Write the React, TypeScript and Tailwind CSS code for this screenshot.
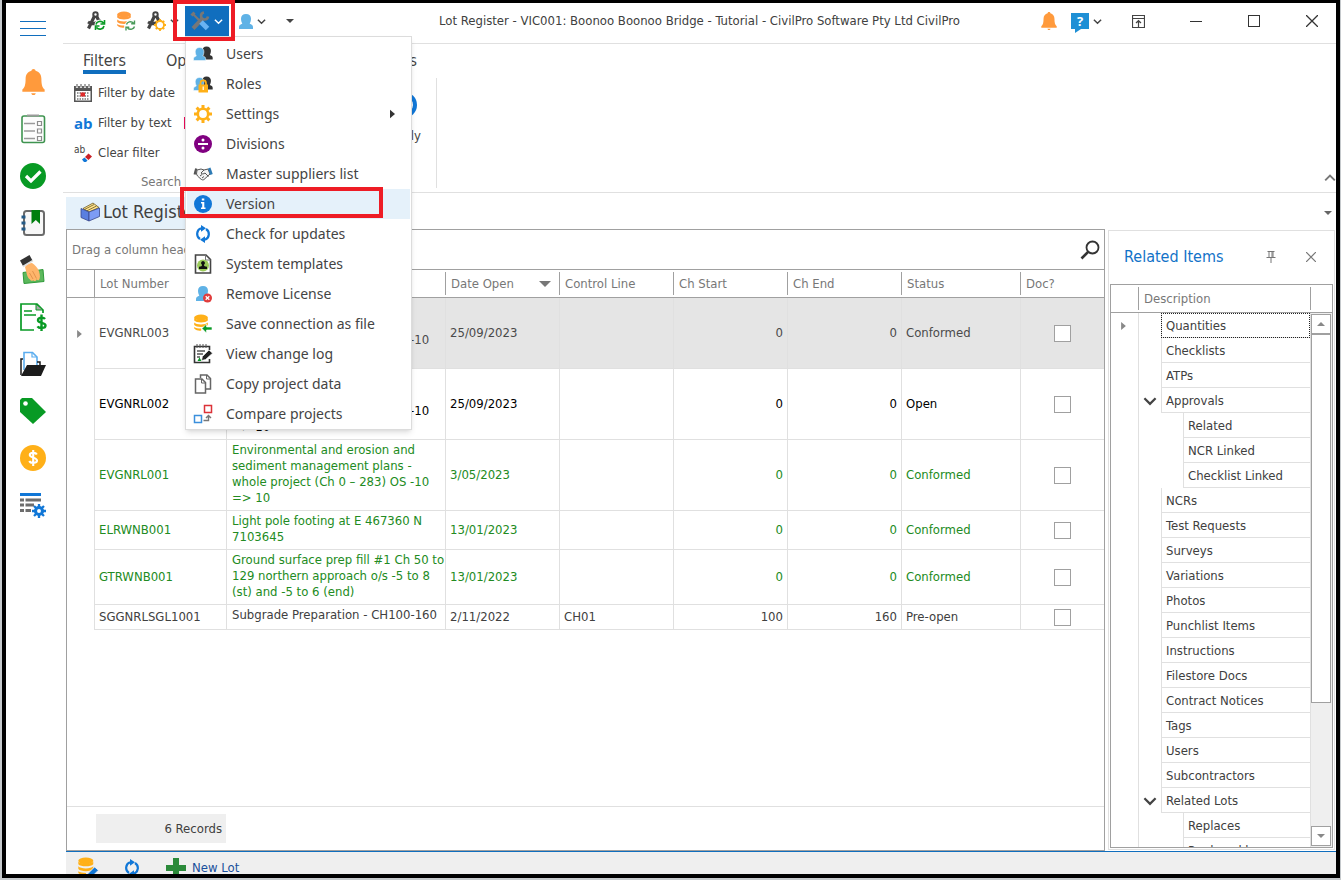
import { useState } from "react";
import type { ReactNode } from "react";

interface IconProps {
    className?: string
}

interface LotRow {
    lot: string,
    description: string,
    date: string,
    controlLine: string,
    start: string,
    end: string,
    status: string,
    color: string,
    selected?: boolean
}

interface TreeItem {
    label: string,
    level: number,
    expanded?: boolean
}

const wholeProject = "Quality and environmental\nmanagement plans -\nwhole project (Ch 0 – 283) OS -10\n=> 10";

const lots: LotRow[] = [
    { lot: "EVGNRL003", description: wholeProject, date: "25/09/2023", controlLine: "", start: "0", end: "0", status: "Conformed", color: "text-[#4a4a4a]", selected: true },
    { lot: "EVGNRL002", description: wholeProject, date: "25/09/2023", controlLine: "", start: "0", end: "0", status: "Open", color: "text-black" },
    { lot: "EVGNRL001", description: "Environmental and erosion and\nsediment management plans -\nwhole project (Ch 0 – 283) OS -10\n=> 10", date: "3/05/2023", controlLine: "", start: "0", end: "0", status: "Conformed", color: "text-[#228b22]" },
    { lot: "ELRWNB001", description: "Light pole footing at E 467360 N\n7103645", date: "13/01/2023", controlLine: "", start: "0", end: "0", status: "Conformed", color: "text-[#228b22]" },
    { lot: "GTRWNB001", description: "Ground surface prep fill #1 Ch 50 to\n129 northern approach o/s -5 to 8\n(st) and -5 to 6 (end)", date: "13/01/2023", controlLine: "", start: "0", end: "0", status: "Conformed", color: "text-[#228b22]" },
    { lot: "SGGNRLSGL1001", description: "Subgrade Preparation - CH100-160", date: "2/11/2022", controlLine: "CH01", start: "100", end: "160", status: "Pre-open", color: "text-[#404040]" },
];

const treeItems: TreeItem[] = [
    { label: "Quantities", level: 0 },
    { label: "Checklists", level: 0 },
    { label: "ATPs", level: 0 },
    { label: "Approvals", level: 0, expanded: true },
    { label: "Related", level: 1 },
    { label: "NCR Linked", level: 1 },
    { label: "Checklist Linked", level: 1 },
    { label: "NCRs", level: 0 },
    { label: "Test Requests", level: 0 },
    { label: "Surveys", level: 0 },
    { label: "Variations", level: 0 },
    { label: "Photos", level: 0 },
    { label: "Punchlist Items", level: 0 },
    { label: "Instructions", level: 0 },
    { label: "Filestore Docs", level: 0 },
    { label: "Contract Notices", level: 0 },
    { label: "Tags", level: 0 },
    { label: "Users", level: 0 },
    { label: "Subcontractors", level: 0 },
    { label: "Related Lots", level: 0, expanded: true },
    { label: "Replaces", level: 1 },
    { label: "Replaced by", level: 1 },
];

function Svg({ box, className, children }: { box: string, className?: string, children: ReactNode }) {
    return (
        <svg viewBox={box} className={`shrink-0 ${className ?? ""}`} fill="none" aria-hidden="true">
            {children}
        </svg>
    );
}

function Chevron({ className }: IconProps) {
    return <Svg box="0 0 10 10" className={className}><path d="M1 3l4 4 4-4" stroke="currentColor" strokeWidth="1.600" /></Svg>;
}

function Triangle({ className }: IconProps) {
    return <Svg box="0 0 12 6" className={className}><path d="M0 0h12L6 6z" fill="currentColor" /></Svg>;
}

function Bell({ className }: IconProps) {
    return (
        <Svg box="0 0 24 28" className={className}>
            <path d="M12 0c1.300 0 2 .8 2.200 2 3.800 1 6.300 4 6.300 8.500 0 6 .8 9.500 3.500 11.500v2.500H0V22c2.700-2 3.500-5.500 3.500-11.500C3.500 6 6 3 9.800 2 10 .8 10.700 0 12 0zM9.500 26h5c-.5 1.300-1.200 2-2.500 2s-2-.7-2.500-2z" fill="#ff9a3c" />
        </Svg>
    );
}

function Checklist() {
    return (
        <Svg box="0 0 26 30" className="h-[30px] w-[26px]">
            <rect x="2" y="2" width="22.500" height="26.500" rx="2" fill="#fcfcfc" stroke="#3f9450" strokeWidth="1.600" />
            <path d="M7 1.500h12" stroke="#9a9a9a" strokeWidth="2" />
            <path d="M4 9.500h11M4 17h11M4 24.500h11" stroke="#9a9a9a" strokeWidth="1.600" />
            <path d="M17.500 7.500h4v4h-4zM17.500 15h4v4h-4zM17.500 22.500h4v4h-4z" stroke="#8c8c8c" strokeWidth="1.200" />
        </Svg>
    );
}

function CheckCircle() {
    return (
        <Svg box="0 0 26 26" className="size-[26px]">
            <circle cx="13" cy="13" r="13" fill="#089a24" />
            <path d="M6 13l5 5 9.500-9.500" stroke="#fff" strokeWidth="3.200" />
        </Svg>
    );
}

function Notebook() {
    return (
        <Svg box="0 0 26 28" className="h-7 w-[26px]">
            <rect x="4" y="2" width="20" height="24" rx="2.500" fill="#f7f7f7" stroke="#6b6b6b" strokeWidth="2" />
            <path d="M11.500 1h8.500v14l-4.200-4-4.300 4z" fill="#007f0e" />
            <path d="M1.500 8h4M1.500 14h4M1.500 20h4" stroke="#245a86" strokeWidth="3" />
        </Svg>
    );
}

function HandCash() {
    return (
        <Svg box="0 0 26 30" className="h-[30px] w-[26px]">
            <path d="M3 17.500l20-3 1 12-20 2z" fill="#5cb85c" stroke="#2f9a3a" />
            <path d="M5 12c2-3 5-4 7-4 3 2 5 4 6.500 7 1 3 2 6 1 9-.8 1.800-2 1.500-2.800.3-.4 2-2.400 2.400-3.400.9-1 1-2.800.6-3.300-.7C7 23 6.500 17 5 12z" fill="#ffb56b" />
            <path d="M9.500 18l3.500 6M12.500 16l4 7.500" stroke="#d98a45" strokeWidth=".8" />
            <path d="M0 5.500L9.500 0l3 5.500L3 11z" fill="#333" />
            <path d="M3 11.500L13 5.500" stroke="#ddd" strokeWidth="1.500" />
        </Svg>
    );
}

function Invoice() {
    return (
        <Svg box="0 0 27 28" className="h-7 w-[27px]">
            <path d="M14 27H1V1h16l6 6v3" stroke="#089a24" strokeWidth="1.700" />
            <path d="M16 1v6h7z" fill="#aaa" stroke="#089a24" />
            <path d="M4 8h8M4 12h12" stroke="#089a24" strokeWidth="1.700" />
            <path d="M25 16c-1.500-2-7-2-7 1.200s7.500 2 7.500 5.200-6.500 3.200-8 .9M21.500 11.500V28" stroke="#089a24" strokeWidth="2.400" />
        </Svg>
    );
}

function FolderDoc() {
    return (
        <Svg box="0 0 26 26" className="size-[26px]">
            <path d="M4 19V1.500h8.500L17 6v10" fill="#fff" stroke="#5badef" strokeWidth="1.600" />
            <path d="M12 1.500V6h5" stroke="#5badef" strokeWidth="1.200" />
            <path d="M3 8H1v16M17 11h3v4" stroke="#1c1c1c" strokeWidth="1.500" />
            <path d="M7 14h19l-5 11H1z" fill="#1c1c1c" />
        </Svg>
    );
}

function Tag() {
    return (
        <Svg box="0 0 26 26" className="size-[26px]">
            <path d="M2 0h10l14 14-13 12L0 14V2z" fill="#089a24" />
            <circle cx="5.500" cy="5.500" r="2.300" fill="#fff" />
        </Svg>
    );
}

function Coin() {
    return (
        <Svg box="0 0 26 26" className="size-[26px]">
            <circle cx="13" cy="13" r="13" fill="#ffb018" />
            <path d="M16.800 9.500c-1-2.300-7-2.300-7 .5s7.200 2.500 7.200 5.600c0 3-6.500 3-7.700.4M13.200 5v16" stroke="#fff" strokeWidth="2.100" />
        </Svg>
    );
}

function GearShape({ color, className }: { color: string, className?: string }) {
    return (
        <Svg box="0 0 18 18" className={className}>
            <circle cx="9" cy="9" r="5.200" stroke={color} strokeWidth="2.600" />
            <path d="M9 0v3M9 15v3M0 9h3M15 9h3M2.600 2.600l2.300 2.300M13.100 13.100l2.300 2.300M15.400 2.600l-2.300 2.300M4.900 13.100l-2.300 2.300" stroke={color} strokeWidth="3" />
        </Svg>
    );
}

function ListGear() {
    return (
        <span className="relative block size-[26px]">
            <Svg box="0 0 26 26" className="size-[26px]">
                <path d="M0 2.500h21" stroke="#1177d7" strokeWidth="3" />
                <path d="M0 8h4M5.500 8H21M0 13h4M5.500 13H14M0 18.500h4M5.500 18.500H11" stroke="#6d6d6d" strokeWidth="3" />
            </Svg>
            <Svg box="0 0 18 18" className="absolute right-0 bottom-0 size-[14px]">
                <circle cx="9" cy="9" r="4.500" stroke="#1177d7" strokeWidth="4" />
                <path d="M9 0v4M9 14v4M0 9h4M14 9h4M2.600 2.600l2.900 2.900M12.500 12.500l2.900 2.900M15.400 2.600l-2.900 2.900M5.500 12.500l-2.900 2.900" stroke="#1177d7" strokeWidth="3" />
            </Svg>
        </span>
    );
}

function Compass({ children }: { children: ReactNode }) {
    return (
        <Svg box="0 0 20 20" className="size-5">
            <circle cx="9.500" cy="3.500" r="2.200" stroke="#444" strokeWidth="2" />
            <path d="M8.500 5L2.500 17.500M10.500 5l5 10.500M2 11c4 2.500 9 2 13-2" stroke="#444" strokeWidth="3.200" />
            {children}
        </Svg>
    );
}

function CompassRefresh() {
    return (
        <Compass>
            <circle cx="14" cy="14" r="5.500" fill="#fff" />
            <path d="M10 13.500c.5-3 5-4.500 7.500-1.500M18 15c-.5 3-5 4.500-7.500 1.500M18.500 9v4h-4M9.500 19v-4h4" stroke="#089a24" strokeWidth="1.600" />
        </Compass>
    );
}

function CompassGear() {
    return (
        <Compass>
            <circle cx="14" cy="14" r="4" fill="#fff" stroke="#ffb018" strokeWidth="1.800" />
            <path d="M14 8v2.500M14 17.500V20M8 14h2.500M17.500 14H20M9.800 9.800l1.700 1.700M16.500 16.500l1.700 1.700M18.200 9.800l-1.700 1.700M11.500 16.500l-1.700 1.700" stroke="#ffb018" strokeWidth="1.800" />
        </Compass>
    );
}

function Database({ color, className, children }: { color: string, className?: string, children?: ReactNode }) {
    return (
        <Svg box="0 0 20 20" className={className}>
            <ellipse cx="8" cy="3.500" rx="6.800" ry="3" fill={color} />
            <path d="M1.200 4v2.500c2 2.500 11.600 2.500 13.600 0V4c-2 2.500-11.600 2.500-13.600 0zM1.200 8.500V11c2 2.500 11.600 2.500 13.600 0V8.500c-2 2.500-11.600 2.500-13.600 0zM1.200 13v1.500c2 2 5 2.500 7 2v-2c-3 0-5.500-.3-7-1.500z" fill={color} />
            {children}
        </Svg>
    );
}

function DatabaseRefresh() {
    return (
        <Database color="#ff9a3c" className="size-5">
            <circle cx="14.500" cy="14.500" r="5.500" fill="#fff" />
            <path d="M10.500 13.500c.5-2.500 4.500-4 7-1.500M18.500 15.500c-.5 2.500-4.500 4-7 1.500M18.500 9.500v3.300h-3.300M10 19.500v-3.300h3.300" stroke="#4a9a5a" strokeWidth="1.400" />
        </Database>
    );
}

function DatabaseArrow() {
    return (
        <Database color="#ffb018" className="size-5">
            <path d="M9 14.500l4.500-4.500v3H19v3h-5.500v3z" fill="#089a24" stroke="#fff" strokeWidth=".6" />
        </Database>
    );
}

function DatabasePencil() {
    return (
        <Database color="#ffb018" className="size-[22px]">
            <path d="M9 19l1-4 6-6 3.500 3-6.500 6.500z" fill="#1177d7" stroke="#efefef" strokeWidth=".8" />
        </Database>
    );
}

function Tools() {
    return (
        <Svg box="0 0 20 20" className="size-5">
            <path d="M3 17.500L12.500 7.500" stroke="#777" strokeWidth="4" />
            <path d="M18 5.500a3.500 3.500 0 11-4-4" stroke="#777" strokeWidth="2.600" />
            <path d="M3 3l6 6" stroke="#777" strokeWidth="2.200" />
            <path d="M1.500 4.500l3-3" stroke="#777" strokeWidth="3" />
            <path d="M11 11l6.500 6.500" stroke="#69b3f3" strokeWidth="5" />
        </Svg>
    );
}

const personPath = "M7 0c3.200 0 5 2 5 4.800 0 2.200-.8 3.900-1.300 4.900 1.800.6 3.300 1.500 3.300 3.300v2H0v-2c0-1.800 1.500-2.700 3.300-3.300C2.800 8.700 2 7 2 4.800 2 2 3.800 0 7 0z";

function User() {
    return <Svg box="0 0 14 15" className="h-[15px] w-[14px]"><path d={personPath} fill="#5fb2e6" /></Svg>;
}

function Users({ children }: { children?: ReactNode }) {
    return (
        <Svg box="0 0 20 18" className="h-[18px] w-5">
            <g transform="translate(7.500 1.500) scale(.87)"><path d={personPath} fill="#333" /></g>
            <g transform="translate(.5 2.500) scale(.87)"><path d={personPath} fill="#5fb2e6" stroke="#fff" strokeWidth=".6" /></g>
            {children}
        </Svg>
    );
}

function Roles() {
    return (
        <Users>
            <path d="M7.500 10V8c0-3.500 5.500-3.500 5.500 0v2" stroke="#ffb018" strokeWidth="1.700" />
            <path d="M5.500 9.500H15V17.500H5.500z" fill="#ffb018" />
            <path d="M10.200 11.500v3.500" stroke="#fff" strokeWidth="1.200" />
        </Users>
    );
}

function Divide() {
    return (
        <Svg box="0 0 18 18" className="size-[18px]">
            <circle cx="9" cy="9" r="9" fill="#800080" />
            <path d="M4 9h10" stroke="#fff" strokeWidth="2" />
            <circle cx="9" cy="5" r="1.500" fill="#fff" />
            <circle cx="9" cy="13" r="1.500" fill="#fff" />
        </Svg>
    );
}

function Handshake() {
    return (
        <Svg box="0 0 20 16" className="h-4 w-5">
            <path d="M4 4l4-1 3 1 4-1 2 5-6 5.500c-1 .7-2 .4-3-.3L4.500 10 3.500 8z" fill="#f3f3f3" stroke="#555" />
            <path d="M11 4L8 7c1 1.500 2.500 1 4 0l3.500 3.500M7 10l2-1.500M9 12l2-1.500" stroke="#555" />
            <path d="M3.200 2.500L1.600 8.500" stroke="#555" strokeWidth="2.200" />
            <path d="M16.200 2l2.300 6.500" stroke="#2d7bb5" strokeWidth="2.600" />
        </Svg>
    );
}

function Info() {
    return (
        <Svg box="0 0 18 18" className="size-[18px]">
            <circle cx="9" cy="9" r="9" fill="#1177d7" />
            <path d="M7.800 3.500h2.500v2H7.800zM7 7h3.300v5.500h1.200V14H7v-1.500h1.200v-4H7z" fill="#fff" />
        </Svg>
    );
}

function Sync({ className }: IconProps) {
    return (
        <Svg box="0 0 18 18" className={className}>
            <path d="M6 14A6 6 0 017 3.300M12 4a6 6 0 01-1 10.700" stroke="#1177d7" strokeWidth="2.200" />
            <path d="M7 0l5 3.300-5 3.500zM11 18l-5-3.300 5-3.500z" fill="#1177d7" />
        </Svg>
    );
}

function Template() {
    return (
        <Svg box="0 0 18 20" className="h-5 w-[18px]">
            <path d="M1.500 1H12l4.500 4.500V19h-15z" fill="#fff" stroke="#444" strokeWidth="1.600" />
            <path d="M11.500 1v5h5" stroke="#777" />
            <circle cx="9" cy="11.500" r="6" fill="#9bcb5b" />
            <path d="M9 7a2 2 0 011 3.700c0 1.500.8 1.600 3 2V15H5v-2.300c2.200-.4 3-.5 3-2A2 2 0 019 7z" fill="#111" />
        </Svg>
    );
}

function RemoveUser() {
    return (
        <Svg box="0 0 18 18" className="size-[18px]">
            <g transform="translate(2 1)"><path d={personPath} fill="#5fb2e6" /></g>
            <circle cx="13.500" cy="13" r="4.500" fill="#e03c3c" />
            <path d="M11.700 11.200l3.600 3.600M15.300 11.200l-3.600 3.600" stroke="#fff" strokeWidth="1.300" />
        </Svg>
    );
}

function ChangeLog() {
    return (
        <Svg box="0 0 20 20" className="size-5">
            <path d="M16.500 6V2.500h-15v16h15V15" stroke="#333" strokeWidth="1.600" />
            <path d="M4 0v4M7 0v4M10 0v4M13 0v4" stroke="#555" />
            <path d="M4 7h8M4 10h6M4 13h3" stroke="#555" strokeWidth="1.500" />
            <path d="M4.500 17l2-3.500 2 3.500z" fill="#089a24" />
            <path d="M8.500 16.500l1-4L16 6l3.500 3.200-7 6.300z" fill="#222" stroke="#fff" strokeWidth=".6" />
        </Svg>
    );
}

function Copy() {
    return (
        <Svg box="0 0 18 20" className="h-5 w-[18px]">
            <path d="M6.500 4V1H13l3.500 3.500V15H12" stroke="#666" strokeWidth="1.500" />
            <path d="M12.500 1v4h4" stroke="#666" />
            <path d="M1.500 5H8l3.500 3.500V19h-10z" fill="#fff" stroke="#666" strokeWidth="1.500" />
            <path d="M7.500 5v4h4" stroke="#666" />
        </Svg>
    );
}

function Compare() {
    return (
        <Svg box="0 0 20 20" className="size-5">
            <path d="M11.500 1.500h7v7h-7z" stroke="#dc3238" strokeWidth="1.500" />
            <path d="M1.500 11.500h7v7h-7z" stroke="#3b8fdc" strokeWidth="1.500" />
            <path d="M10.500 16.500h5V12M13 14l2.500-2.500L18 14" stroke="#777" strokeWidth="1.400" />
        </Svg>
    );
}

function Calendar() {
    return (
        <Svg box="0 0 18 18" className="size-[18px]">
            <path d="M0 2h18v16H0z" fill="#555" />
            <path d="M1.500 7h15v9.500h-15z" fill="#fff" />
            <path d="M3 0v4M7 0v4M11 0v4M15 0v4" stroke="#fff" strokeWidth="2.200" />
            <path d="M3 0v3.500M7 0v3.500M11 0v3.500M15 0v3.500" stroke="#555" />
            <path d="M3 9h12M3 12h12M3 15h12" stroke="#777" strokeWidth="1.500" strokeDasharray="1.500 1" />
            <path d="M6.500 8.500h4.500v4H6.500z" fill="#e02b2b" />
        </Svg>
    );
}

function Eraser() {
    return (
        <Svg box="0 0 10 9" className="h-[9px] w-[10px]">
            <path d="M3 4l3.500-3.500L10 3.500 6.500 7z" fill="#c92027" />
            <path d="M0 6.500l2.500-2L5.500 7.500 4 9H2z" fill="#1177d7" />
        </Svg>
    );
}

function BoxFiles() {
    return (
        <Svg box="0 0 22 20" className="h-5 w-[22px]">
            <path d="M4 6.500L14 1l6 4.500L10 10z" fill="#ffe28a" stroke="#6b5a2a" strokeWidth=".8" />
            <path d="M5.500 7.500L15 2.500M7.500 9L17.500 4" stroke="#6b5a2a" strokeWidth=".8" />
            <path d="M2 6.500l8 3.500v9l-8-3.500z" fill="#5a7fe0" stroke="#39488a" strokeWidth=".8" />
            <path d="M10 10l10.500-4v8.500L10 19z" fill="#7d9cf5" stroke="#39488a" strokeWidth=".8" />
        </Svg>
    );
}

function Help() {
    return (
        <span className="relative flex h-4 w-[18px] justify-center bg-[#1e8fd5] font-['Open_Sans',sans-serif] text-[13px] leading-4 font-bold text-white">
            ?
            <Svg box="0 0 6 4" className="absolute top-full left-1 h-1 w-1.5"><path d="M0 0h6L0 4z" fill="#1e8fd5" /></Svg>
        </span>
    );
}

const sideItems = [
    { label: "Notifications", icon: <Bell className="h-[26px] w-[23px]" /> },
    { label: "Checklists", icon: <Checklist /> },
    { label: "Approvals", icon: <CheckCircle /> },
    { label: "Diary", icon: <Notebook /> },
    { label: "Payments", icon: <HandCash /> },
    { label: "Claims", icon: <Invoice /> },
    { label: "Documents", icon: <FolderDoc /> },
    { label: "Tags", icon: <Tag /> },
    { label: "Costs", icon: <Coin /> },
    { label: "Register setup", icon: <ListGear /> },
];

const menuItems = [
    { label: "Users", icon: <Users /> },
    { label: "Roles", icon: <Roles /> },
    { label: "Settings", icon: <GearShape color="#ffb018" className="size-[18px]" />, submenu: true },
    { label: "Divisions", icon: <Divide /> },
    { label: "Master suppliers list", icon: <Handshake /> },
    { label: "Version", icon: <Info />, active: true },
    { label: "Check for updates", icon: <Sync className="size-[18px]" /> },
    { label: "System templates", icon: <Template /> },
    { label: "Remove License", icon: <RemoveUser /> },
    { label: "Save connection as file", icon: <DatabaseArrow /> },
    { label: "View change log", icon: <ChangeLog /> },
    { label: "Copy project data", icon: <Copy /> },
    { label: "Compare projects", icon: <Compare /> },
];

function SettingsMenu() {
    return (
        <div role="menu" className="absolute top-full left-0 z-20 w-[227px] border border-[#dcdcdc] bg-white px-px pt-0.5 shadow-md">
            {menuItems.map((item) => (
                <button
                    key={item.label}
                    role="menuitem"
                    className={`relative flex h-[30px] w-full items-center pl-1.5 font-['Noto_Sans','Open_Sans',sans-serif] text-sm text-[#444] ${item.active ? "bg-[#e5f1fa]" : ""}`}>
                    <span className="mr-[13px] flex w-5 justify-center">{item.icon}</span>
                    {item.label}
                    {item.submenu && <Svg box="0 0 6 10" className="mr-[15px] ml-auto h-2.5 w-[5px]"><path d="M0 0l6 5-6 5z" fill="#333" /></Svg>}
                    {item.active && <span className="absolute -top-0.5 -left-[7px] h-[31px] w-[203px] border-4 border-[#ee1c25]" />}
                </button>
            ))}
        </div>
    );
}

function TitleBar() {
    const [open, setOpen] = useState(true);
    return (
        <header className="grid h-[41px] shrink-0 grid-cols-[1fr_auto_1fr] items-center border-b border-[#e0e0e0] pb-1">
            <div className="flex items-center gap-2.5 pl-[23px]">
                <button aria-label="Refresh project"><CompassRefresh /></button>
                <button aria-label="Refresh data"><DatabaseRefresh /></button>
                <button aria-label="Project setup" className="flex w-[29px] items-center gap-1"><CompassGear /><Chevron className="size-[9px] text-[#444]" /></button>
                <div className="relative">
                    <button
                        aria-label="Application settings"
                        aria-expanded={open}
                        onClick={() => setOpen(!open)}
                        className="flex h-[30px] w-11 items-center gap-1 bg-[#106ebe] pl-[5px] text-white">
                        <Tools />
                        <Chevron className="size-[9px]" />
                    </button>
                    <span className="pointer-events-none absolute -top-1.5 -left-3 z-30 h-[41px] w-[62px] border-4 border-[#ee1c25]" />
                    {open && <SettingsMenu />}
                </div>
                <button aria-label="User" className="flex items-center gap-1 text-[#444]"><User /><Chevron className="size-[9px]" /></button>
                <button aria-label="Customise toolbar" className="ml-2.5 text-[#444]"><Triangle className="h-1 w-2" /></button>
            </div>
            <h1 className="text-[13px] whitespace-nowrap text-[#404040]">Lot Register - VIC001: Boonoo Boonoo Bridge - Tutorial - CivilPro Software Pty Ltd CivilPro</h1>
            <div className="flex items-center justify-end gap-[38px] pr-3.5 text-[#444]">
                <div className="-mr-3 flex items-center gap-1">
                    <button aria-label="Alerts" className="mr-2.5"><Bell className="h-[18px] w-4" /></button>
                    <button aria-label="Help" className="flex items-center gap-1"><Help /><Chevron className="size-[9px]" /></button>
                </div>
                <button aria-label="Ribbon display" className="flex w-5 justify-center">
                    <Svg box="0 0 13 13" className="size-[13px]">
                        <path d="M.5.5h12v12H.5zM.5 3.500h12M6.500 13V6M4 8l2.500-2.500L9 8" stroke="currentColor" strokeWidth="1.200" />
                    </Svg>
                </button>
                <button aria-label="Minimise" className="flex h-5 w-5 items-center justify-center"><span className="h-px w-3 bg-[#333]" /></button>
                <button aria-label="Maximise" className="flex h-5 w-5 items-center justify-center"><span className="size-3 border border-[#333]" /></button>
                <button aria-label="Close" className="flex h-5 w-5 items-center justify-center">
                    <Svg box="0 0 12 12" className="size-3"><path d="M0 0l12 12M12 0L0 12" stroke="#333" strokeWidth="1.300" /></Svg>
                </button>
            </div>
        </header>
    );
}

function Ribbon() {
    return (
        <section className="flex h-[149px] shrink-0 flex-col border-b border-[#e0e0e0]">
            <nav className="flex w-[354px] gap-10 pt-2 pl-5 text-base leading-[18px] text-[#444]">
                <button className="border-b-4 border-[#106ebe]">Filters</button>
                <button className="border-b-4 border-transparent">Options</button>
                <button className="ml-auto border-b-4 border-transparent">Reports</button>
            </nav>
            <div className="flex flex-1 pt-1 pl-[11px] text-[#444]">
                <div className="flex w-[174px] flex-col">
                    <div className="flex">
                        <div className="flex w-[110px] flex-col">
                            <button className="flex h-[30px] items-center gap-1.5 whitespace-nowrap"><Calendar />Filter by date</button>
                            <button className="flex h-[30px] items-center gap-1.5 whitespace-nowrap">
                                <span className="w-[18px] font-['Open_Sans',sans-serif] text-[15px] leading-5 font-bold text-[#1177d7]">ab</span>
                                Filter by text
                            </button>
                            <button className="flex h-[30px] items-center gap-1.5 whitespace-nowrap">
                                <span className="relative w-[18px] pb-1.5 text-left text-[10px] leading-3">ab<span className="absolute right-0 bottom-0"><Eraser /></span></span>
                                Clear filter
                            </button>
                        </div>
                        <div className="flex h-[90px] items-center">
                            <button aria-label="Filter by status"><span className="block h-3 w-4 border-l-2 border-[#ee0a5a]" /></button>
                        </div>
                    </div>
                    <p className="pt-1 text-center text-[#777]">Search</p>
                </div>
                <div className="mb-1 flex w-[189px] items-start justify-end border-r border-[#e0e0e0] pt-3.5 pr-[15px]">
                    <button className="flex flex-col items-center gap-2">
                        <span className="size-[26px] rounded-full border-4 border-[#1177d7]" />
                        Apply
                    </button>
                </div>
                <button aria-label="Collapse ribbon" className="mb-2 ml-auto self-end text-[#777]"><Chevron className="size-3 rotate-180" /></button>
            </div>
        </section>
    );
}

function HeadCell({ children, last }: { children?: ReactNode, last?: boolean }) {
    return (
        <th className="border-b border-[#a0a0a0] p-0 text-left font-normal">
            <div className={`flex h-[23px] items-center justify-between pr-2 pl-[5px] ${last ? "" : "border-r border-[#a0a0a0]"}`}>{children}</div>
        </th>
    );
}

function LotGrid() {
    const cell = "border-r border-b border-[#e0e0e0] px-1 py-0 leading-4";
    return (
        <section className="flex min-w-0 flex-1 flex-col border border-[#a0a0a0]">
            <div className="flex h-10 shrink-0 items-center justify-between border-b border-[#a0a0a0] pr-1 pl-[5px] text-[#777]">
                <p>Drag a column header here to group by that column</p>
                <button aria-label="Search">
                    <Svg box="0 0 20 20" className="size-5"><circle cx="12.500" cy="7.500" r="6" stroke="#333" strokeWidth="1.800" /><path d="M8.500 11.500L1.500 18.500" stroke="#333" strokeWidth="2.600" /></Svg>
                </button>
            </div>
            <table className="w-full table-fixed border-separate border-spacing-0">
                <colgroup>
                    <col className="w-7" />
                    <col className="w-[132px]" />
                    <col className="w-[219px]" />
                    <col className="w-[114px]" />
                    <col className="w-[114px]" />
                    <col className="w-[114px]" />
                    <col className="w-[114px]" />
                    <col className="w-[119px]" />
                    <col />
                </colgroup>
                <thead>
                    <tr className="h-7 text-[#777]">
                        <th aria-label="Row marker" className="border-r border-b border-[#a0a0a0] p-0" />
                        <HeadCell>Lot Number</HeadCell>
                        <HeadCell>Description</HeadCell>
                        <HeadCell>Date Open<Triangle className="h-1.5 w-3" /></HeadCell>
                        <HeadCell>Control Line</HeadCell>
                        <HeadCell>Ch Start</HeadCell>
                        <HeadCell>Ch End</HeadCell>
                        <HeadCell>Status</HeadCell>
                        <HeadCell last>Doc?</HeadCell>
                    </tr>
                </thead>
                <tbody>
                    {lots.map((row) => (
                        <tr key={row.lot} className={`h-[25px] ${row.color}`}>
                            <td className="border-r border-[#e0e0e0] bg-white p-0">
                                {row.selected && <Svg box="0 0 6 10" className="ml-2.5 h-2 w-[5px]"><path d="M0 0l6 5-6 5z" fill="#888" /></Svg>}
                            </td>
                            <td className={`${cell} ${row.selected ? "bg-white" : ""}`}>{row.lot}</td>
                            <td className={`${cell} align-top ${row.selected ? "bg-[#e5e5e5]" : ""}`}>
                                <p className="-mr-1 pt-0.5 pb-1 pl-px leading-4 whitespace-pre">{row.description}</p>
                            </td>
                            <td className={`${cell} ${row.selected ? "bg-[#e5e5e5]" : ""}`}>{row.date}</td>
                            <td className={`${cell} ${row.selected ? "bg-[#e5e5e5]" : ""}`}>{row.controlLine}</td>
                            <td className={`${cell} text-right ${row.selected ? "bg-[#e5e5e5]" : ""}`}>{row.start}</td>
                            <td className={`${cell} text-right ${row.selected ? "bg-[#e5e5e5]" : ""}`}>{row.end}</td>
                            <td className={`${cell} ${row.selected ? "bg-[#e5e5e5]" : ""}`}>{row.status}</td>
                            <td className={`border-b border-[#e0e0e0] p-0 ${row.selected ? "bg-[#e5e5e5]" : ""}`}>
                                <input type="checkbox" aria-label={`Doc for ${row.lot}`} className="mx-auto block size-[17px] appearance-none border border-[#a0a0a0] bg-white checked:bg-[#106ebe]" />
                            </td>
                        </tr>
                    ))}
                </tbody>
            </table>
            <footer className="mt-auto h-11 shrink-0 border-t border-[#e0e0e0] pt-[7px] pl-[29px]">
                <p className="flex h-[29px] w-[130px] items-center justify-end bg-[#efefef] pr-1 text-[#404040]">6 Records</p>
            </footer>
        </section>
    );
}

function RelatedItems() {
    return (
        <aside className="mt-px mb-px flex w-[227px] shrink-0 flex-col border border-[#e0e0e0] p-px pt-0">
            <div className="flex h-[53px] shrink-0 items-center pb-0.5 pl-3.5">
                <h2 className="text-base text-[#1272c8]">Related Items</h2>
                <button aria-label="Pin panel" className="mr-[30px] ml-auto">
                    <Svg box="0 0 10 12" className="h-3 w-2.5"><path d="M1.500.5h7M3 .5v6M7 .5v6M6 .5v6M.5 6.500h9M5 6.500V12" stroke="#777" /></Svg>
                </button>
                <button aria-label="Close panel" className="mr-[17px]"><Svg box="0 0 10 10" className="size-2.5"><path d="M0 0l10 10M10 0L0 10" stroke="#777" strokeWidth="1.200" /></Svg></button>
            </div>
            <div className="flex min-h-0 flex-1 flex-col border border-[#a0a0a0]">
                <div className="flex h-7 shrink-0 items-center border-b border-[#a0a0a0] text-[#777]">
                    <span className="h-[23px] w-7 border-r border-[#a0a0a0]" />
                    <span className="flex h-[23px] flex-1 items-center border-r border-[#a0a0a0] pl-[5px]">Description</span>
                    <span className="w-[21px]" />
                </div>
                <div className="flex min-h-0 flex-1">
                    <ul role="tree" className="min-w-0 flex-1 overflow-hidden border-r border-[#e0e0e0] text-[#404040]">
                        {treeItems.map((item, i) => (
                            <li key={item.label} role="treeitem" aria-expanded={item.expanded} className="flex h-[25px]">
                                <span className="flex w-7 items-center border-r border-[#e0e0e0] pl-2.5">
                                    {i === 0 && <Svg box="0 0 6 10" className="h-2 w-[5px]"><path d="M0 0l6 5-6 5z" fill="#888" /></Svg>}
                                </span>
                                <span className={`flex items-center justify-center ${item.level ? "w-11" : "w-[22px]"}`}>
                                    {item.expanded && <Chevron className="size-3.5 text-[#444]" />}
                                </span>
                                <span className={`flex flex-1 items-center border-b border-l border-[#e0e0e0] pt-px pl-1 ${i === 0 ? "outline-1 -outline-offset-1 outline-dotted outline-[#222]" : ""}`}>{item.label}</span>
                            </li>
                        ))}
                    </ul>
                    <div className="flex w-[21px] shrink-0 flex-col bg-[#efefef] pt-px pr-px pb-px">
                        <button aria-label="Scroll up" className="flex h-5 shrink-0 items-center justify-center border border-[#a0a0a0] bg-white text-[#888]"><Triangle className="h-1 w-2 rotate-180" /></button>
                        <div className="h-[369px] border border-[#a0a0a0] bg-white" />
                        <button aria-label="Scroll down" className="mt-auto flex h-5 shrink-0 items-center justify-center border border-[#a0a0a0] bg-white text-[#888]"><Triangle className="h-1 w-2" /></button>
                    </div>
                </div>
            </div>
        </aside>
    );
}

export default function App() {
    return (
        <div className="h-screen overflow-hidden bg-[#c5c9cc] pr-px pb-0.5 pl-0.5 font-['DejaVu_Sans_Condensed','Noto_Sans',sans-serif] text-[13px]">
            <div className="flex h-full border-4 border-t-[3px] border-black bg-white">
                <nav className="flex w-[57px] shrink-0 flex-col items-center pr-[3px]">
                    <button aria-label="Menu" className="mb-[5px] flex h-[50px] w-[26px] flex-col justify-center gap-1.5">
                        <span className="h-px w-full bg-[#106ebe]" />
                        <span className="h-px w-full bg-[#106ebe]" />
                        <span className="h-px w-full bg-[#106ebe]" />
                    </button>
                    {sideItems.map((item) => (
                        <button key={item.label} aria-label={item.label} className="flex h-[47px] w-full items-center justify-center">{item.icon}</button>
                    ))}
                </nav>
                <div className="flex min-w-0 flex-1 flex-col">
                    <TitleBar />
                    <Ribbon />
                    <main className="flex min-h-0 flex-1 flex-col pl-[3px]">
                        <div className="flex h-9 shrink-0 items-center justify-between pt-1 pr-1">
                            <button className="flex h-8 w-[160px] items-center gap-0.5 bg-[#e5f1fa] pb-0.5 pl-[13px] text-lg text-[#404040]"><BoxFiles />Lot Register</button>
                            <button aria-label="Open windows" className="text-[#666]"><Triangle className="h-1 w-2" /></button>
                        </div>
                        <div className="flex min-h-0 flex-1 gap-[3px] pr-px">
                            <LotGrid />
                            <RelatedItems />
                        </div>
                        <footer className="h-[23px] shrink-0 overflow-hidden border-t border-[#106ebe] bg-[#efefef]">
                            <div className="flex h-8 items-center pl-[11px] text-[#1a4f9c]">
                                <button aria-label="Edit data" className="mr-6"><DatabasePencil /></button>
                                <button aria-label="Refresh" className="mr-6"><Sync className="size-[18px]" /></button>
                                <button className="flex items-center gap-[5px]">
                                    <Svg box="0 0 22 22" className="size-[22px]"><path d="M8 1h6v7h7v6h-7v7H8v-7H1V8h7z" fill="#2b8a3a" /></Svg>
                                    New Lot
                                </button>
                            </div>
                        </footer>
                    </main>
                </div>
            </div>
        </div>
    );
}
